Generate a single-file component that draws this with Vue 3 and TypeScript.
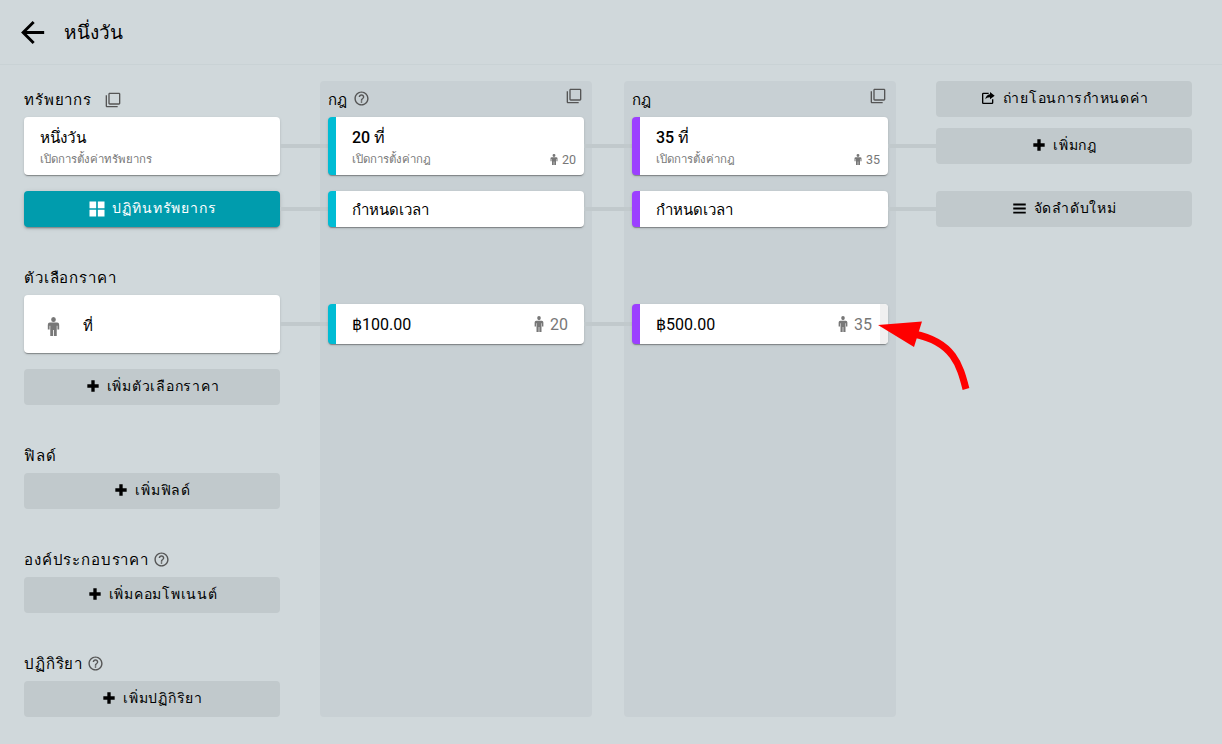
<script setup lang="ts">
const icons = {
  back: 'M20,11V13H8L13.5,18.5L12.08,19.92L4.16,12L12.08,4.08L13.5,5.5L8,11H20Z',
  copy: 'M3 5H1v16c0 1.1.9 2 2 2h16v-2H3V5zm18-4H7c-1.1 0-2 .9-2 2v14c0 1.1.9 2 2 2h14c1.1 0 2-.9 2-2V3c0-1.1-.9-2-2-2zm0 16H7V3h14v14z',
  help: 'M11 18h2v-2h-2v2zm1-16C6.48 2 2 6.48 2 12s4.48 10 10 10 10-4.48 10-10S17.52 2 12 2zm0 18c-4.41 0-8-3.59-8-8s3.59-8 8-8 8 3.59 8 8-3.59 8-8 8zm0-14c-2.21 0-4 1.79-4 4h2c0-1.1.9-2 2-2s2 .9 2 2c0 2-3 1.75-3 5h2c0-2.25 3-2.5 3-5 0-2.21-1.79-4-4-4z',
  person: 'M8 0a2.9 2.9 0 1 1 0 5.8a2.900 2.900 0 1 1 0-5.800zM3.500 6.500h9A2.500 2.500 0 0 1 15 9v5.500h-2.200V10h-.8v12H8.500v-7h-1v7H4V10h-.8v4.500H1V9a2.500 2.500 0 0 1 2.500-2.500z',
  plus: 'M20.500 14.500H14.500V20.500H9.500V14.500H3.500V9.500H9.500V3.500H14.500V9.500H20.500V14.500Z',
  grid: 'M3,11H11V3H3M3,21H11V13H3M13,21H21V13H13M13,3V11H21V3',
  menu: 'M2,4H22V7H2V4M2,10.500H22V13.500H2V10.500M2,17H22V20H2V17Z',
  share: 'M5 4h8v2H5v13h13v-5h2v5a2 2 0 0 1-2 2H5a2 2 0 0 1-2-2V6a2 2 0 0 1 2-2zM15 3l7 5.5-7 5.5v-3.2c-3.4 0-5.6 1-7 3.2.4-3.900 2.800-6.900 7-7.500z',
}
const rules = [
  { accent: 'cyan', people: '20', price: '฿100.00', help: true },
  { accent: 'purple', people: '35', price: '฿500.00', help: false },
]
const sections = [
  { label: 'ฟิลด์', help: false, action: 'เพิ่มฟิลด์' },
  { label: 'องค์ประกอบราคา', help: true, action: 'เพิ่มคอมโพเนนต์' },
  { label: 'ปฏิกิริยา', help: true, action: 'เพิ่มปฏิกิริยา' },
]
</script>

<template>
  <div class="page">
    <header class="topbar">
      <svg class="back" viewBox="0 0 24 24"><path :d="icons.back" /></svg>
      <h1>หนึ่งวัน</h1>
    </header>
    <main class="board">
      <section class="col-left">
        <div class="label">
          ทรัพยากร
          <svg class="ic-copy" viewBox="0 0 24 24"><path :d="icons.copy" /></svg>
        </div>
        <div class="card tall linked">
          <div class="title thai">หนึ่งวัน</div>
          <div class="sub">เปิดการตั้งค่าทรัพยากร</div>
        </div>
        <button class="calendar linked">
          <svg class="ic-grid" viewBox="0 0 24 24"><path :d="icons.grid" /></svg>
          ปฏิทินทรัพยากร
        </button>

        <div class="label price-label">ตัวเลือกราคา</div>
        <div class="card tall option linked">
          <svg class="ic-person-lg" viewBox="0 0 16 22" preserveAspectRatio="none"><path :d="icons.person" /></svg>
          <span class="option-name">ที่</span>
        </div>
        <button class="action add-option">
          <svg class="ic-plus" viewBox="0 0 24 24"><path :d="icons.plus" /></svg>
          เพิ่มตัวเลือกราคา
        </button>

        <div v-for="s in sections" :key="s.label" class="block">
          <div class="label">
            {{ s.label }}
            <svg v-if="s.help" class="ic-help" viewBox="0 0 24 24"><path :d="icons.help" /></svg>
          </div>
          <button class="action">
            <svg class="ic-plus" viewBox="0 0 24 24"><path :d="icons.plus" /></svg>
            {{ s.action }}
          </button>
        </div>
      </section>

      <section v-for="r in rules" :key="r.accent" class="panel" :class="r.accent">
        <div class="panel-head">
          <span>กฎ</span>
          <svg v-if="r.help" class="ic-help" viewBox="0 0 24 24"><path :d="icons.help" /></svg>
          <svg class="ic-copy panel-copy" viewBox="0 0 24 24"><path :d="icons.copy" /></svg>
        </div>
        <div class="card tall rule linked">
          <div class="title">{{ r.people }} ที่</div>
          <div class="sub-row">
            <span class="sub">เปิดการตั้งค่ากฎ</span>
            <span class="count">
              <svg class="ic-person-sm" viewBox="0 0 16 22" preserveAspectRatio="none"><path :d="icons.person" /></svg>{{ r.people }}
            </span>
          </div>
        </div>
        <div class="card short rule linked">กำหนดเวลา</div>
        <div class="card price rule linked">
          <span class="amount">{{ r.price }}</span>
          <span class="count big">
            <svg class="ic-person-md" viewBox="0 0 16 22" preserveAspectRatio="none"><path :d="icons.person" /></svg>{{ r.people }}
          </span>
          <span v-if="r.accent === 'purple'" class="hover-strip"></span>
        </div>
      </section>

      <section class="col-right">
        <button class="action transfer">
          <svg class="ic-share" viewBox="0 0 24 24"><path :d="icons.share" /></svg>
          ถ่ายโอนการกำหนดค่า
        </button>
        <button class="action add-rule">
          <svg class="ic-plus" viewBox="0 0 24 24"><path :d="icons.plus" /></svg>
          เพิ่มกฎ
        </button>
        <button class="action reorder">
          <svg class="ic-menu" viewBox="0 0 24 24"><path :d="icons.menu" /></svg>
          จัดลำดับใหม่
        </button>
      </section>
    </main>

    <svg class="pointer" viewBox="0 0 120 100" aria-hidden="true">
      <path d="M88 89C82 66 76 42 36 34" fill="none" stroke="#ff0000" stroke-width="7" />
      <path d="M0 25L44 21.500L36 47Z" fill="#ff0000" />
    </svg>
  </div>
</template>

<style>
html, body { margin: 0; background: #d0d8db; }
</style>

<style scoped>
.page {
  position: relative;
  width: 1222px;
  height: 744px;
  overflow: hidden;
  background: #d0d8db;
  color: #000;
  font-family: Roboto, "Noto Sans", sans-serif;
  font-size: 16px;
}
.topbar {
  display: flex;
  align-items: center;
  box-sizing: border-box;
  height: 65px;
  padding-left: 15px;
  border-bottom: 1px solid #c9d2d5;
}
.back { width: 35px; height: 35px; fill: #000; }
h1 { margin: 0 0 0 14px; font-size: 19px; font-weight: 500; }
.board { display: flex; align-items: flex-start; padding: 16px 0 0 24px; }
.col-left { width: 256px; margin-right: 40px; }
.col-right { width: 256px; margin-left: 40px; display: flex; flex-direction: column; }
.panel {
  box-sizing: border-box;
  width: 272px;
  height: 636px;
  padding: 0 8px;
  border-radius: 4px;
  background: #c8d0d4;
}
.panel + .panel { margin-left: 32px; }
.label {
  display: flex;
  align-items: center;
  box-sizing: border-box;
  height: 36px;
  padding-top: 2px;
  font-size: 15px;
  font-weight: 500;
  letter-spacing: .85px;
}
.price-label { margin-top: 32px; }
.block { margin-top: 32px; }
.panel-head {
  position: relative;
  display: flex;
  align-items: center;
  box-sizing: border-box;
  height: 36px;
  padding-top: 2px;
  font-size: 15px;
  font-weight: 500;
}
.ic-copy { width: 16px; height: 16px; fill: #555; margin-left: 13px; }
.panel-copy { position: absolute; right: 2px; top: 7px; margin: 0; }
.ic-help { width: 17px; height: 17px; fill: #555; margin: -2px 0 0 4px; }
.panel-head .ic-help { margin: -4px 0 0 6px; }
.card {
  position: relative;
  box-sizing: border-box;
  border-radius: 4px;
  background: #fff;
  box-shadow: 0 2px 1px -1px rgba(0,0,0,.2), 0 1px 1px rgba(0,0,0,.14), 0 1px 3px rgba(0,0,0,.12);
}
.linked::after {
  content: "";
  position: absolute;
  left: 100%;
  top: calc(50% - 2px);
  width: 48px;
  height: 4px;
  background: #c1c9cc;
}
.panel.purple .price.linked::after { display: none; }
.tall { height: 58px; padding: 9px 16px; }
.title { font-size: 16px; font-weight: 500; line-height: 24px; }
.title.thai { font-size: 15.300px; }
.sub { font-size: 11.400px; line-height: 17px; color: #777; }
.title + .sub { display: block; margin-top: 1px; }
.rule { border-left: 8px solid; }
.cyan .rule { border-left-color: #00bcd4; }
.purple .rule { border-left-color: #9c3fff; }
.sub-row { display: flex; justify-content: space-between; align-items: center; height: 17px; margin-top: 1px; }
.count { display: inline-flex; align-items: center; color: #777; font-size: 12.500px; margin-right: -8px; }
.count.big { font-size: 16px; margin-right: 0; }
.ic-person-sm { width: 8px; height: 11px; fill: #777; margin-right: 4px; }
.ic-person-md { width: 10px; height: 16px; fill: #777; margin-right: 6px; }
.ic-person-lg { width: 13px; height: 19px; fill: #777; margin-left: 7px; }
.short {
  display: flex;
  align-items: center;
  height: 36px;
  margin-top: 16px;
  padding: 2px 0 0 16px;
  font-size: 15px;
  font-weight: 500;
}
.price {
  display: flex;
  align-items: center;
  justify-content: space-between;
  height: 40px;
  margin-top: 77px;
  padding: 0 16px;
  font-size: 16px;
}
.hover-strip {
  position: absolute;
  top: 0;
  right: 0;
  bottom: 0;
  width: 8px;
  border-radius: 0 4px 4px 0;
  background: #f0f0f0;
}
.option { display: flex; align-items: center; margin-bottom: 16px; padding-top: 11px; padding-bottom: 7px; }
.option-name { margin-left: 23px; font-size: 15px; font-weight: 500; }
button {
  display: flex;
  align-items: center;
  justify-content: center;
  box-sizing: border-box;
  width: 100%;
  height: 36px;
  padding: 0 0 2px;
  border: 0;
  border-radius: 4px;
  font-family: inherit;
  font-size: 14px;
  font-weight: 500;
  letter-spacing: .75px;
  color: #000;
}
.action { position: relative; background: #c1c9cc; }
.calendar {
  position: relative;
  margin-top: 16px;
  background: #009cad;
  color: #fff;
  letter-spacing: .95px;
  box-shadow: 0 3px 1px -2px rgba(0,0,0,.2), 0 2px 2px rgba(0,0,0,.14), 0 1px 5px rgba(0,0,0,.12);
}
.transfer { letter-spacing: .7px; }
.add-rule { margin-top: 11px; }
.reorder { margin-top: 27px; }
.ic-plus { width: 16px; height: 16px; fill: #000; margin-right: 6px; }
.ic-grid { width: 20px; height: 20px; fill: #fff; margin: 2px 5px 0 0; }
.ic-menu { width: 15px; height: 15px; fill: #000; margin-right: 7px; }
.ic-share { width: 16px; height: 16px; fill: #000; margin-right: 7px; }
.pointer { position: absolute; left: 878px; top: 300px; width: 120px; height: 100px; }
</style>
